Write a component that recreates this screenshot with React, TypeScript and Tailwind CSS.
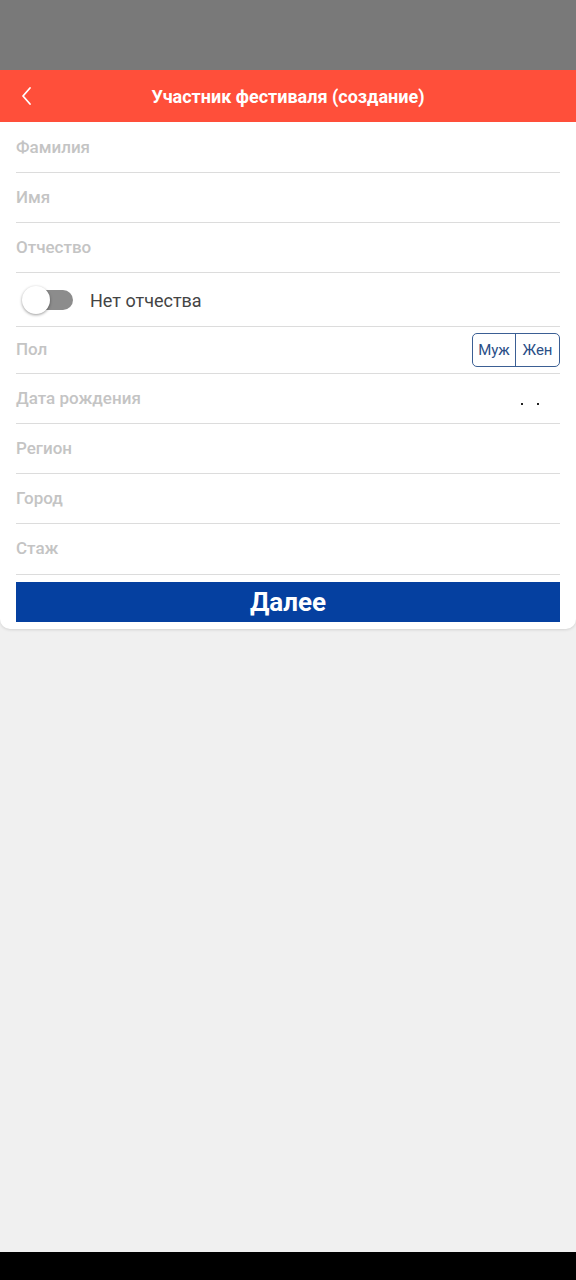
import { useState } from "react";

const fields = ["Фамилия", "Имя", "Отчество"];
const lower = ["Регион", "Город"];

function Field({ label, tall }: { label: string; tall?: boolean }) {
  return (
    <div className={`flex items-center border-b border-[#dcdcdc] ${tall ? "h-[51px]" : "h-[50px]"}`}>
      <span className="text-[17px] font-medium text-[#c4c4c4]">{label}</span>
    </div>
  );
}

export default function App() {
  const [noPatronymic, setNoPatronymic] = useState(false);

  return (
    <div className="flex min-h-[1280px] flex-col bg-[#f0f0f0]" style={{ fontFamily: "Roboto, 'Noto Sans', sans-serif" }}>
      <div className="h-[70px] bg-[#797979]" />
      <header className="relative flex h-[52px] items-center justify-center bg-[#ff4f3a]">
        <button className="absolute left-[18px] top-[15px] text-white">
          <svg width="16" height="22" viewBox="0 0 16 22" fill="none" stroke="currentColor" strokeWidth="1.8" strokeLinecap="round" strokeLinejoin="round">
            <path d="M12 3 L5 11 L12 19" />
          </svg>
        </button>
        <h1 className="text-[18px] font-bold text-white">Участник фестиваля (создание)</h1>
      </header>

      <div className="rounded-b-[10px] bg-white px-4 pb-[7px] pt-[1px] shadow-[0_1px_3px_rgba(0,0,0,0.12)]">
        {fields.map((f) => (
          <Field key={f} label={f} />
        ))}
        <div className="flex h-[54px] items-center gap-4 border-b border-[#dcdcdc]">
          <button onClick={() => setNoPatronymic(!noPatronymic)} className="relative ml-[7px] h-[20px] w-[50px] rounded-full bg-[#8c8c8c]">
            <span className="absolute -left-[1px] -top-[4px] h-[28px] w-[28px] rounded-full bg-white shadow-[0_1px_3px_rgba(0,0,0,0.4)]" />
          </button>
          <span className="ml-[1px] pt-[2px] text-[18px] text-[#444]">Нет отчества</span>
        </div>
        <div className="flex h-[47px] items-center justify-between border-b border-[#dcdcdc]">
          <span className="text-[17px] font-medium text-[#c4c4c4]">Пол</span>
          <div className="flex h-[34px] overflow-hidden rounded-[5px] border border-[#3b5f94] text-[15px] text-[#2b4f87]">
            <button className="flex w-[43px] items-center justify-center border-r border-[#3b5f94]">Муж</button>
            <button className="flex w-[43px] items-center justify-center">Жен</button>
          </div>
        </div>
        <div className="flex h-[50px] items-center justify-between border-b border-[#dcdcdc]">
          <span className="text-[17px] font-medium text-[#c4c4c4]">Дата рождения</span>
          <span className="mr-[21px] flex gap-[14px] pt-[10px]">
            <span className="h-[2px] w-[2px] bg-[#222]" />
            <span className="h-[2px] w-[2px] bg-[#222]" />
          </span>
        </div>
        {lower.map((f) => (
          <Field key={f} label={f} />
        ))}
        <Field label="Стаж" tall />
        <button className="mt-[7px] flex h-[40px] w-full items-center justify-center bg-[#0540a0] text-[26px] font-bold text-white">
          Далее
        </button>
      </div>

      <div className="flex-1" />
      <div className="h-[28px] bg-black" />
    </div>
  );
}
